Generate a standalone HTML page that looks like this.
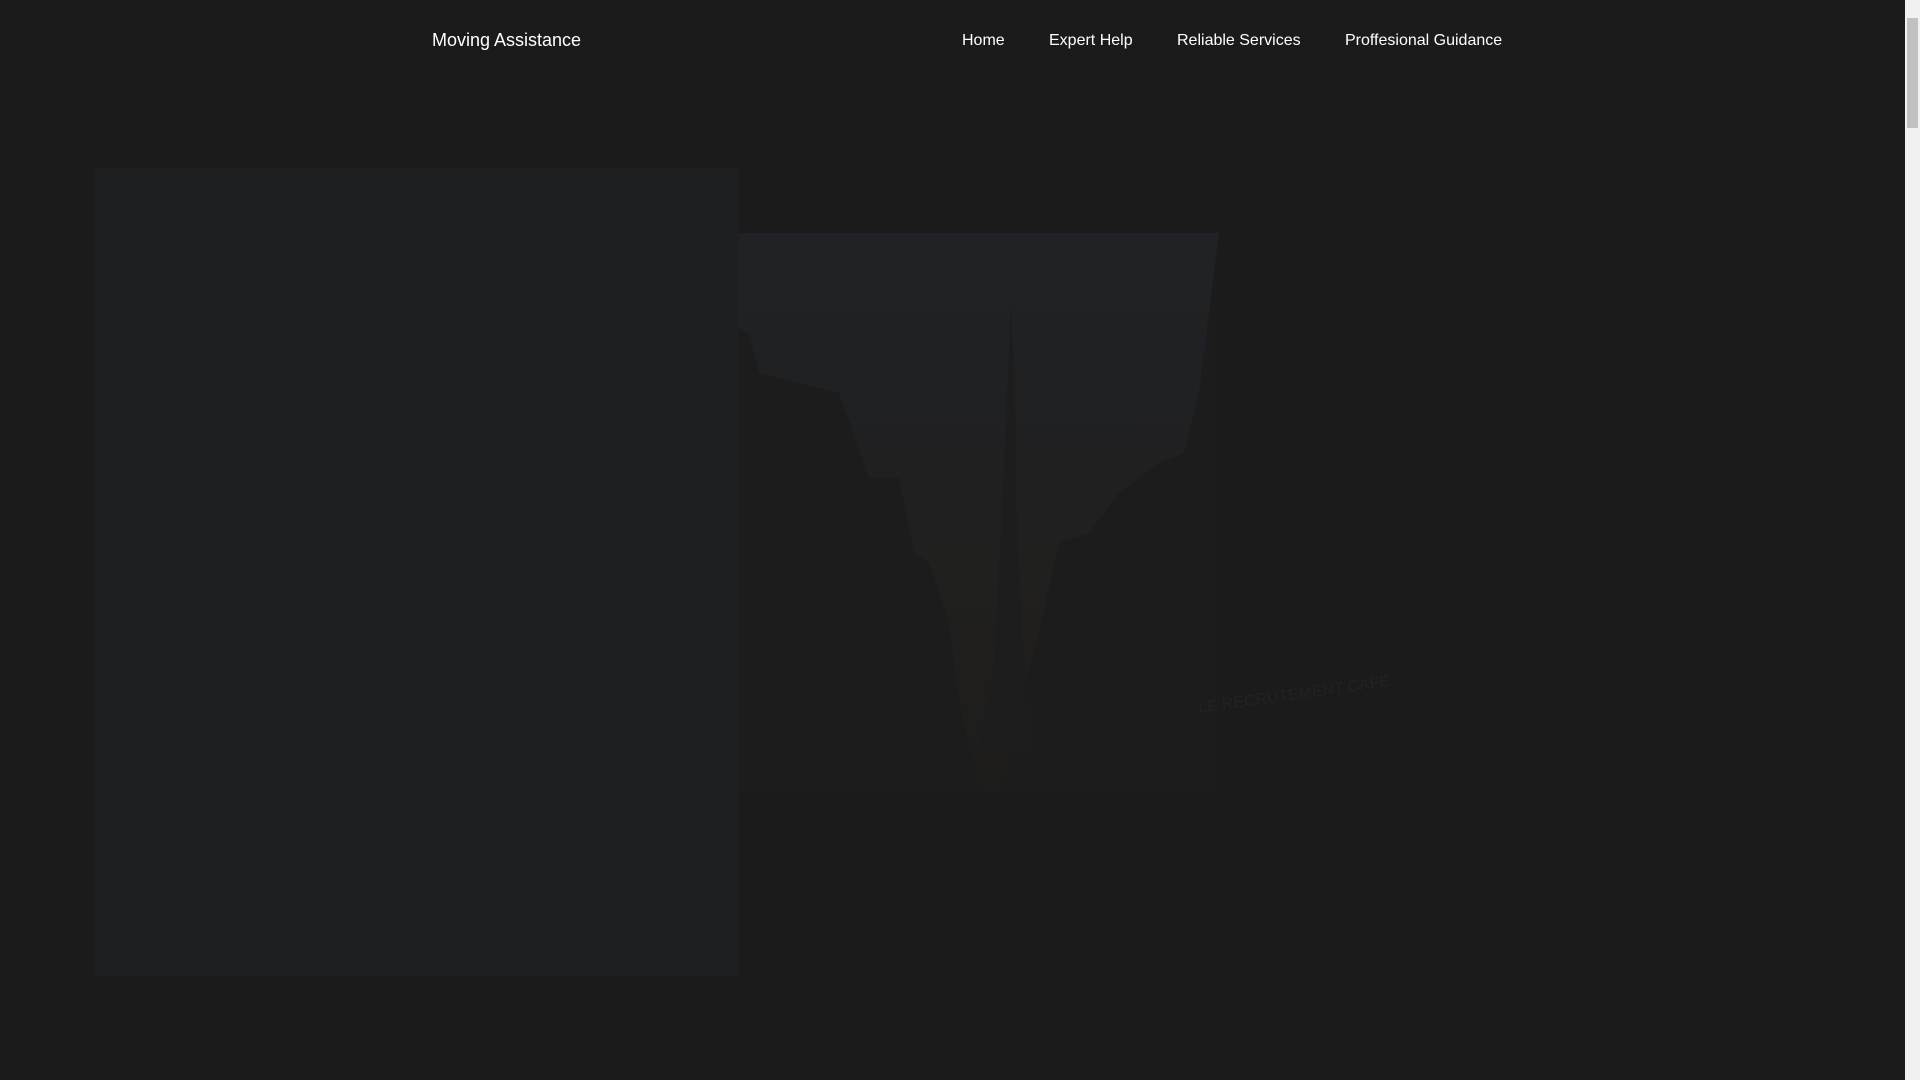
<!DOCTYPE html>
<html><head><meta charset="utf-8"><style>
html,body{margin:0;padding:0;background:#1b1b1b;width:1920px;height:1080px;overflow:hidden;font-family:"Liberation Sans",sans-serif}
.brand{position:absolute;left:432px;top:30px;font-size:18px;color:#fff}
.nav{position:absolute;top:32px;font-size:16px;color:#fff}
.panel{position:absolute;left:94px;top:168px;width:645px;height:808px;background:#1e1f21}
.img{position:absolute;left:739px;top:233px;width:970px;height:677px}
.sb{position:absolute;right:0;top:0;width:15px;height:1080px;background:#f1f1f1}
.th{position:absolute;right:2px;top:18px;width:11px;height:110px;background:#c1c1c1}
</style></head><body>
<div class="brand">Moving Assistance</div>
<div class="nav" style="left:962px">Home</div>
<div class="nav" style="left:1049px">Expert Help</div>
<div class="nav" style="left:1177px">Reliable Services</div>
<div class="nav" style="left:1345px">Proffesional Guidance</div>
<div class="panel"></div>
<svg class="img" viewBox="0 0 970 677" width="970" height="677">
<defs><linearGradient id="s" x1="0" y1="0" x2="0" y2="1"><stop offset="0" stop-color="#202226"/><stop offset="0.7" stop-color="#201f1d"/><stop offset="1" stop-color="#1c1c1c"/></linearGradient></defs>
<rect width="970" height="677" fill="#1b1b1b"/>
<rect width="480" height="600" fill="url(#s)"/>
<polygon points="0,95 10,100 20,140 60,150 100,160 130,245 160,245 175,320 190,330 210,390 220,470 240,560 250,677 0,677" fill="#1c1c1d"/>
<polygon points="480,0 480,677 260,677 265,560 280,470 300,400 320,310 350,300 380,260 420,230 445,220 460,160 470,80" fill="#1c1c1c"/>
<polygon points="100,0 100,0" fill="none"/>
<polygon points="272,75 268,160 262,300 255,430 240,520 300,520 285,430 278,300 276,160" fill="#1d1d1d"/>
<rect x="0" y="560" width="970" height="117" fill="#1b1b1b"/>
<rect x="480" y="0" width="490" height="677" fill="#1b1b1b"/>
<text x="460" y="480" fill="#222" font-size="16" transform="rotate(-8 460 480)">LE RECRUTEMENT  CAFE</text>
</svg>
<div class="sb"><div class="th"></div></div>
</body></html>
